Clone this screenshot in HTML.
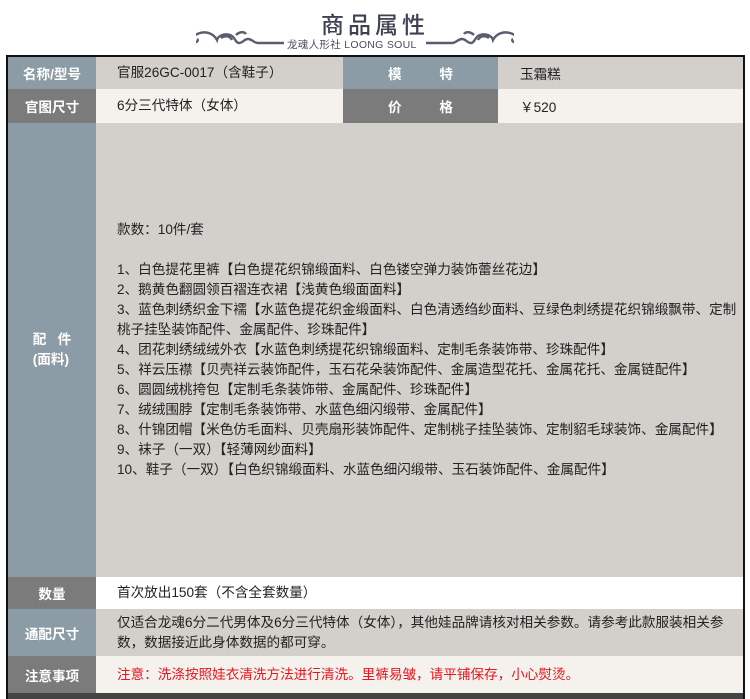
<!DOCTYPE html>
<html><head><meta charset="utf-8"><style>
*{margin:0;padding:0;box-sizing:border-box}
body{width:750px;height:699px;background:#fff;font-family:"Liberation Sans","Noto Sans CJK SC","WenQuanYi Zen Hei",sans-serif;font-size:13.6px;color:#222;position:relative;overflow:hidden}
.title{position:absolute;left:0;width:750px;top:6px;text-align:center;font-size:23px;color:#3e4152;letter-spacing:4px;font-weight:500}
.sub{position:absolute;left:287px;top:37px;font-size:10.5px;color:#4a4d5e;letter-spacing:0.3px}
.frame{position:absolute;left:6px;top:55px;width:739px;height:644px;border:2px solid #111;border-bottom:none;background:#444}
.r{position:absolute;left:0;width:735px}
.c{position:absolute;top:0;height:100%;display:flex;align-items:center}
.lab{left:0;width:88px;justify-content:center;color:#fff;font-weight:bold}
.blue{background:#8c9ca7}.gray{background:#7b7b7b}
.g1{background:#d3cfca}.g2{background:#f5f2ed}.w{background:#fff}
.txt{padding-left:21px;line-height:20px}
</style></head><body>
<div class="title">商品属性</div>
<svg style="position:absolute;left:196px;top:28px" width="90" height="20" viewBox="0 0 90 20"><path d="M88 15 H62 M62 15 c-4 0 -6 -4 -10 -4 c-4 0 -5 4 -9 4 c-4 0 -4 -7 -9 -8 c-6 -2 -12 1 -13 5 c-3 -6 -10 -9 -17 -7 c-7 2 -10 7 -6 9 c3 1 5 -2 3 -3 M25 10 c4 -3 9 -2 11 2 M40 7 c3 -3 8 -4 10 -1" fill="none" stroke="#5a5d70" stroke-width="2.4"/></svg>
<svg style="position:absolute;left:424px;top:28px;transform:scaleX(-1)" width="90" height="20" viewBox="0 0 90 20"><path d="M88 15 H62 M62 15 c-4 0 -6 -4 -10 -4 c-4 0 -5 4 -9 4 c-4 0 -4 -7 -9 -8 c-6 -2 -12 1 -13 5 c-3 -6 -10 -9 -17 -7 c-7 2 -10 7 -6 9 c3 1 5 -2 3 -3 M25 10 c4 -3 9 -2 11 2 M40 7 c3 -3 8 -4 10 -1" fill="none" stroke="#5a5d70" stroke-width="2.4"/></svg>
<div class="sub">龙魂人形社 LOONG SOUL</div>
<div class="frame">
<div class="r" style="top:0;height:32px">
<div class="c lab blue">名称/型号</div>
<div class="c g1 txt" style="left:88px;width:247px">官服26GC-0017（含鞋子）</div>
<div class="c blue" style="left:335px;width:155px;justify-content:center;color:#fff;font-weight:bold">模&nbsp;&nbsp;&nbsp;&nbsp;&nbsp;&nbsp;&nbsp;&nbsp;&nbsp;&nbsp;特</div>
<div class="c g1" style="left:490px;width:245px;padding-left:22px">玉霜糕</div>
</div>
<div class="r" style="top:32px;height:34px">
<div class="c lab gray">官图尺寸</div>
<div class="c g2 txt" style="left:88px;width:247px">6分三代特体（女体）</div>
<div class="c gray" style="left:335px;width:155px;justify-content:center;color:#fff;font-weight:bold">价&nbsp;&nbsp;&nbsp;&nbsp;&nbsp;&nbsp;&nbsp;&nbsp;&nbsp;&nbsp;格</div>
<div class="c g2" style="left:490px;width:245px;padding-left:22px">￥520</div>
</div>
<div class="r" style="top:66px;height:454px">
<div class="c lab blue" style="flex-direction:column;line-height:20px">配&nbsp;&nbsp;&nbsp;件<br>(面料)</div>
<div class="c g1" style="left:88px;width:647px;padding-left:21px;padding-right:2px;display:block;padding-top:97px;line-height:20px">款数：10件/套<br><br>1、白色提花里裤【白色提花织锦缎面料、白色镂空弹力装饰蕾丝花边】<br>2、鹅黄色翻圆领百褶连衣裙【浅黄色缎面面料】<br>3、蓝色刺绣织金下襦【水蓝色提花织金缎面料、白色清透绉纱面料、豆绿色刺绣提花织锦缎飘带、定制桃子挂坠装饰配件、金属配件、珍珠配件】<br>4、团花刺绣绒绒外衣【水蓝色刺绣提花织锦缎面料、定制毛条装饰带、珍珠配件】<br>5、祥云压襟【贝壳祥云装饰配件，玉石花朵装饰配件、金属造型花托、金属花托、金属链配件】<br>6、圆圆绒桃挎包【定制毛条装饰带、金属配件、珍珠配件】<br>7、绒绒围脖【定制毛条装饰带、水蓝色细闪缎带、金属配件】<br>8、什锦团帽【米色仿毛面料、贝壳扇形装饰配件、定制桃子挂坠装饰、定制貂毛球装饰、金属配件】<br>9、袜子（一双）【轻薄网纱面料】<br>10、鞋子（一双）【白色织锦缎面料、水蓝色细闪缎带、玉石装饰配件、金属配件】</div>
</div>
<div class="r" style="top:520px;height:32px">
<div class="c lab gray">数量</div>
<div class="c w txt" style="left:88px;width:647px">首次放出150套（不含全套数量）</div>
</div>
<div class="r" style="top:552px;height:47px">
<div class="c lab blue">通配尺寸</div>
<div class="c g1 txt" style="left:88px;width:647px;padding-right:2px">仅适合龙魂6分二代男体及6分三代特体（女体），其他娃品牌请核对相关参数。请参考此款服装相关参数，数据接近此身体数据的都可穿。</div>
</div>
<div class="r" style="top:599px;height:37px">
<div class="c lab gray">注意事项</div>
<div class="c g2 txt" style="left:88px;width:647px;color:#e8141e">注意：洗涤按照娃衣清洗方法进行清洗。里裤易皱，请平铺保存，小心熨烫。</div>
</div>
</div>
</body></html>
